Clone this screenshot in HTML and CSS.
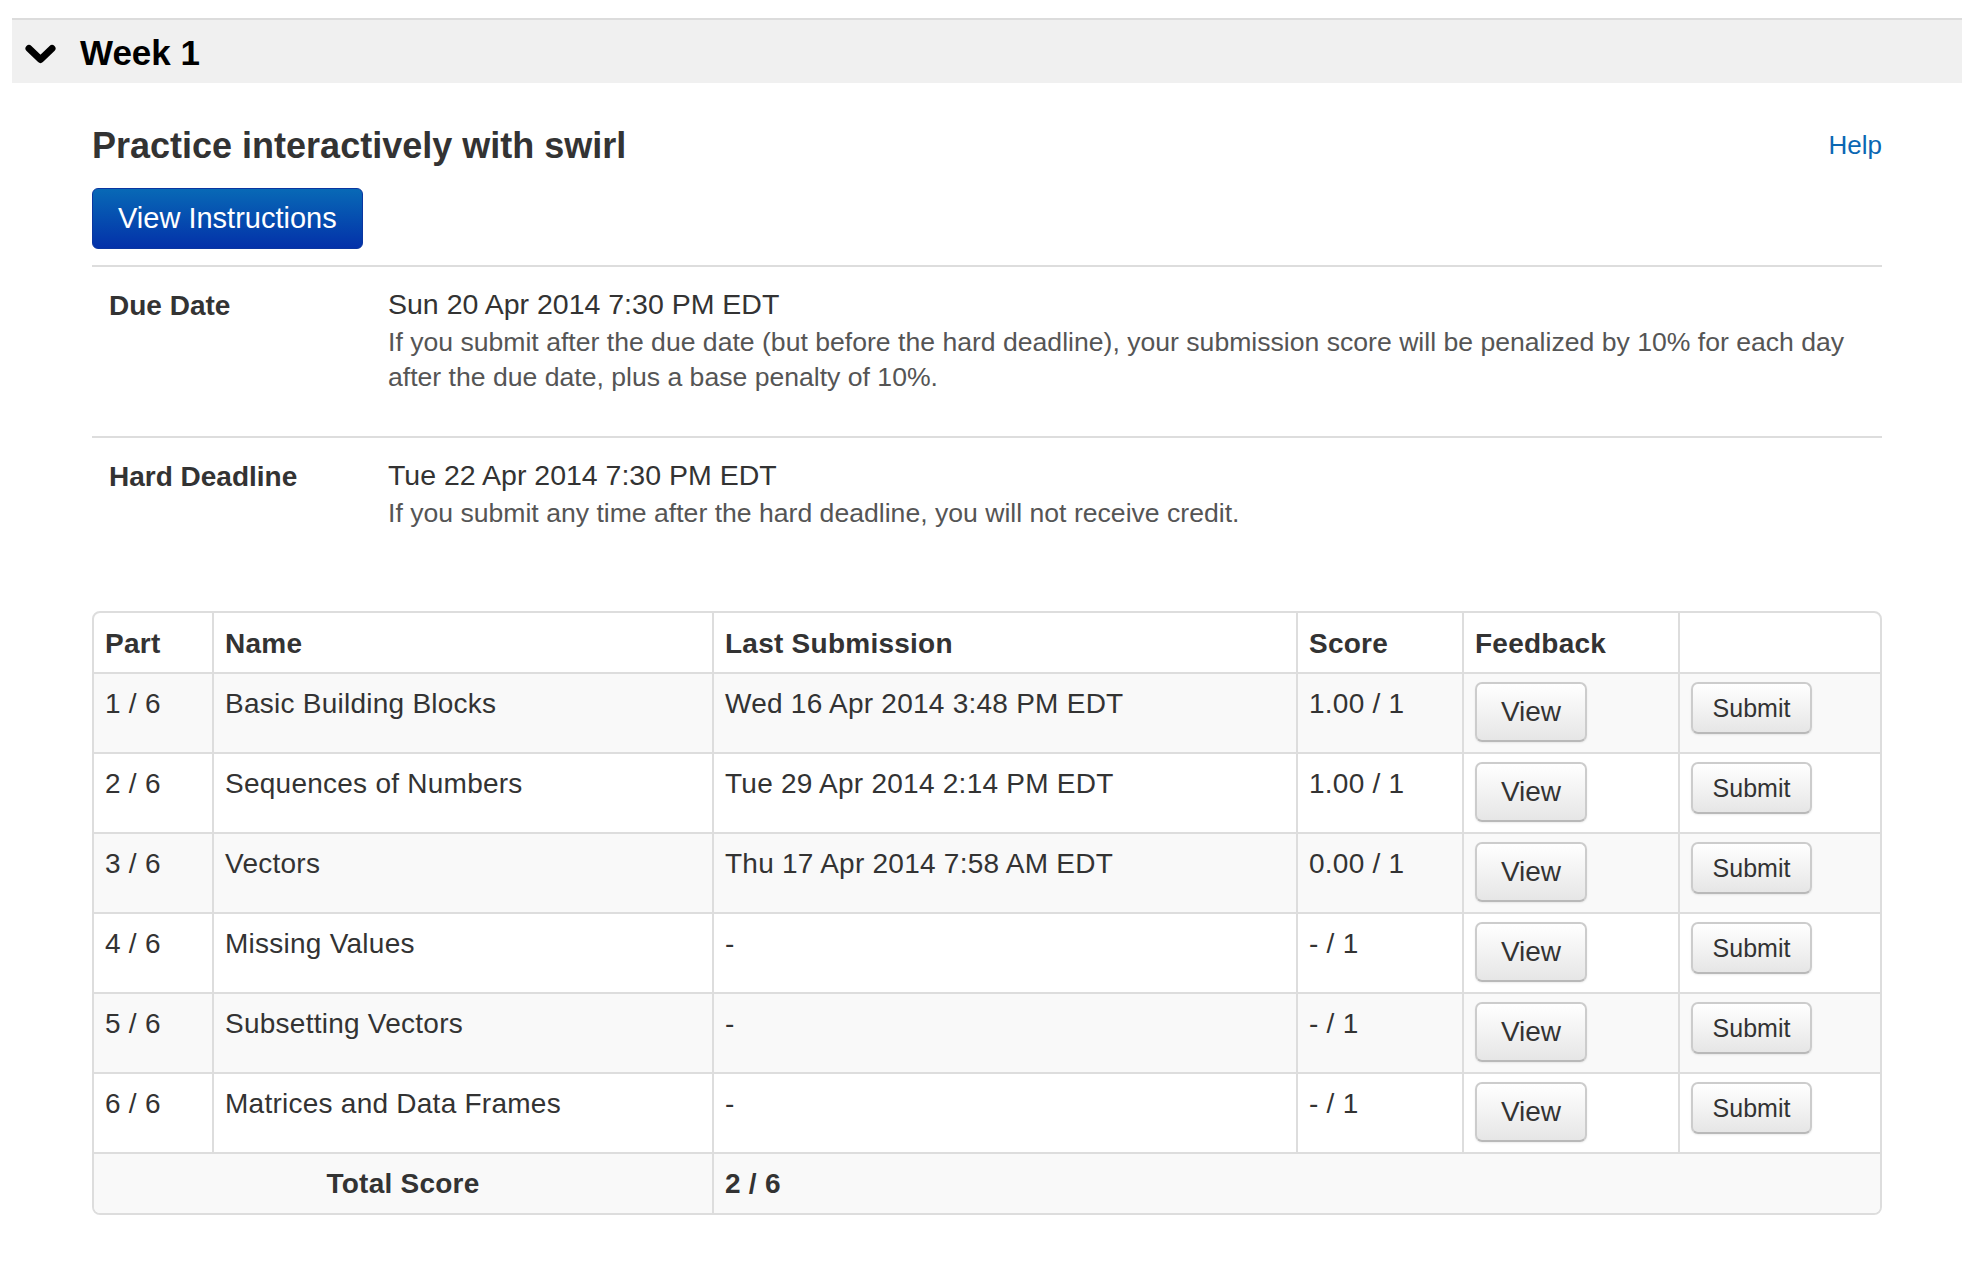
FILE: index.html
```html
<!DOCTYPE html>
<html lang="en">
<head>
<meta charset="utf-8">
<title>Week 1</title>
<link rel="stylesheet" href="styles.css">
</head>
<body>
<section class="week">
  <div class="week-header">
    <svg class="chev" viewBox="0 0 31 20" width="31" height="20" aria-hidden="true"><path d="M4 4.5 L15.5 15.5 L27 4.5" fill="none" stroke="#000" stroke-width="7" stroke-linecap="round" stroke-linejoin="round"/></svg>
    <h2 class="week-title">Week 1</h2>
  </div>

  <div class="assignment">
    <div class="title-row">
      <h3 class="title">Practice interactively with swirl</h3>
      <a class="help" href="#">Help</a>
    </div>
    <a class="btn-primary" href="#">View Instructions</a>

    <div class="deadlines">
      <div class="deadline-row">
        <div class="dl-label">Due Date</div>
        <div class="dl-value">
          <div class="dl-date">Sun 20 Apr 2014 7:30 PM EDT</div>
          <div class="dl-desc">If you submit after the due date (but before the hard deadline), your submission score will be penalized by 10% for each day after the due date, plus a base penalty of 10%.</div>
        </div>
      </div>
      <div class="deadline-row">
        <div class="dl-label">Hard Deadline</div>
        <div class="dl-value">
          <div class="dl-date">Tue 22 Apr 2014 7:30 PM EDT</div>
          <div class="dl-desc">If you submit any time after the hard deadline, you will not receive credit.</div>
        </div>
      </div>
    </div>

    <table class="parts">
      <thead>
        <tr>
          <th class="c-part">Part</th>
          <th class="c-name">Name</th>
          <th class="c-last">Last Submission</th>
          <th class="c-score">Score</th>
          <th class="c-fb">Feedback</th>
          <th class="c-act"></th>
        </tr>
      </thead>
      <tbody>
        <tr>
          <td>1 / 6</td><td>Basic Building Blocks</td><td>Wed 16 Apr 2014 3:48 PM EDT</td><td>1.00 / 1</td>
          <td><a class="btn btn-view" href="#">View</a></td><td><a class="btn btn-submit" href="#">Submit</a></td>
        </tr>
        <tr>
          <td>2 / 6</td><td>Sequences of Numbers</td><td>Tue 29 Apr 2014 2:14 PM EDT</td><td>1.00 / 1</td>
          <td><a class="btn btn-view" href="#">View</a></td><td><a class="btn btn-submit" href="#">Submit</a></td>
        </tr>
        <tr>
          <td>3 / 6</td><td>Vectors</td><td>Thu 17 Apr 2014 7:58 AM EDT</td><td>0.00 / 1</td>
          <td><a class="btn btn-view" href="#">View</a></td><td><a class="btn btn-submit" href="#">Submit</a></td>
        </tr>
        <tr>
          <td>4 / 6</td><td>Missing Values</td><td>-</td><td>- / 1</td>
          <td><a class="btn btn-view" href="#">View</a></td><td><a class="btn btn-submit" href="#">Submit</a></td>
        </tr>
        <tr>
          <td>5 / 6</td><td>Subsetting Vectors</td><td>-</td><td>- / 1</td>
          <td><a class="btn btn-view" href="#">View</a></td><td><a class="btn btn-submit" href="#">Submit</a></td>
        </tr>
        <tr>
          <td>6 / 6</td><td>Matrices and Data Frames</td><td>-</td><td>- / 1</td>
          <td><a class="btn btn-view" href="#">View</a></td><td><a class="btn btn-submit" href="#">Submit</a></td>
        </tr>
      </tbody>
      <tfoot>
        <tr>
          <td class="total-label" colspan="2">Total Score</td>
          <td class="total-value" colspan="4">2 / 6</td>
        </tr>
      </tfoot>
    </table>
  </div>
</section>
</body>
</html>
```

FILE: styles.css
```css
* { box-sizing: border-box; }

html, body {
  margin: 0;
  padding: 0;
  background: #fff;
}

body {
  font-family: "Liberation Sans", Arial, Helvetica, sans-serif;
  color: #333;
  padding-top: 18px;
}

/* Week header band */
.week-header {
  margin: 0 18px 0 12px;
  height: 65px;
  border-top: 2px solid #dcdcdc;
  background: #f0f0f0;
  display: flex;
  align-items: flex-start;
  padding-left: 13px;
}

.chev {
  display: block;
  margin-top: 24px;
  flex: none;
}

.week-title {
  margin: 13px 0 0 24px;
  font-size: 35px;
  line-height: 40px;
  font-weight: bold;
  color: #000;
}

/* Assignment block */
.assignment {
  margin-left: 92px;
  width: 1790px;
}

.title-row {
  display: flex;
  justify-content: space-between;
  align-items: flex-start;
  margin-top: 43px;
}

.title {
  margin: 0;
  font-size: 36px;
  line-height: 40px;
  font-weight: bold;
  color: #333;
}

.help {
  margin-top: 1px;
  font-size: 26px;
  line-height: 36px;
  color: #0b67b3;
  text-decoration: none;
}

.btn-primary {
  display: block;
  width: max-content;
  margin-top: 22px;
  height: 61px;
  line-height: 59px;
  padding: 0 25px;
  font-size: 29px;
  color: #fff;
  text-decoration: none;
  background: linear-gradient(#0869b6, #0331a9);
  border: 1px solid #0a36a0;
  border-radius: 6px;
}

/* Deadlines */
.deadlines {
  margin-top: 16px;
}

.deadline-row {
  display: flex;
  border-top: 2px solid #dddddd;
  padding: 16px 0 41px;
}

.dl-label {
  width: 296px;
  flex: none;
  padding: 2px 0 0 17px;
  font-size: 28px;
  line-height: 42px;
  font-weight: bold;
  color: #333;
}

.dl-value {
  flex: 1;
  padding-right: 18px;
}

.dl-date {
  font-size: 28.5px;
  line-height: 42px;
  color: #333;
}

.dl-desc {
  font-size: 26.6px;
  line-height: 35px;
  color: #555;
}

/* Parts table */
.parts {
  width: 1790px;
  margin-top: 39px;
  table-layout: fixed;
  border-collapse: separate;
  border-spacing: 0;
  border: 2px solid #dddddd;
  border-radius: 8px;
  font-size: 28px;
  letter-spacing: 0.25px;
  color: #333;
}

.parts th,
.parts td {
  text-align: left;
  vertical-align: top;
  padding: 8px 11px 10px;
  line-height: 44px;
  border-left: 2px solid #dddddd;
  border-top: 2px solid #dddddd;
  font-weight: normal;
}

.parts th:first-child,
.parts td:first-child {
  border-left: 0;
}

.parts thead th {
  border-top: 0;
  padding: 13px 11px 10px;
  line-height: 36px;
  font-weight: bold;
}

.c-part { width: 118px; }
.c-name { width: 500px; }
.c-last { width: 584px; }
.c-score { width: 166px; }
.c-fb { width: 216px; }
.c-act { width: 202px; }

.parts tbody tr:nth-child(odd) td {
  background: #f9f9f9;
}

.parts tfoot td {
  padding: 8px 11px 7px;
  background: #f9f9f9;
  font-weight: bold;
}

.parts tfoot td.total-label {
  text-align: center;
  border-bottom-left-radius: 6px;
}

.parts tfoot td.total-value {
  border-bottom-right-radius: 6px;
}

/* Grey buttons */
.btn {
  display: block;
  text-align: center;
  color: #333;
  text-decoration: none;
  letter-spacing: 0;
  background: linear-gradient(#ffffff, #e6e6e6);
  border: 2px solid #cccccc;
  border-bottom-color: #b9b9b9;
  border-radius: 7px;
  box-shadow: 0 1px 2px rgba(0, 0, 0, 0.08);
}

.btn-view {
  width: 112px;
  height: 60px;
  font-size: 28px;
  line-height: 56px;
}

.btn-submit {
  width: 121px;
  height: 52px;
  font-size: 25px;
  line-height: 48px;
}
```
